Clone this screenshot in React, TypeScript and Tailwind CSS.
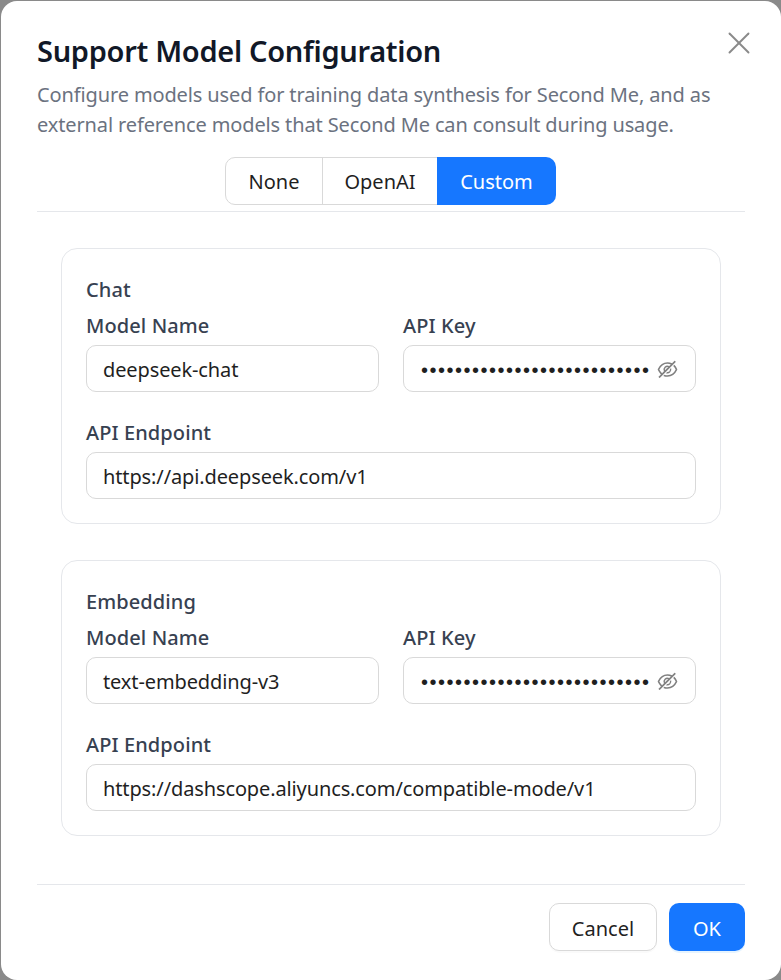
import { X } from 'lucide-react'
import { AiOutlineEyeInvisible } from 'react-icons/ai'

function Field({ label, value, secret }: { label: string; value: string; secret?: boolean }) {
  return (
    <div className="flex flex-col min-w-0">
      <label className="h-6 mb-[7px] leading-6 text-[20px] font-medium text-[#374151] tracking-[0.1px]">{label}</label>
      <div className="h-[47px] flex items-center pl-4 pr-4 pt-0.5 rounded-[10px] border border-[#d9d9d9] bg-white text-[20px] text-[#1f1f1f]">
        {secret ? (
          <>
            <span className="flex-1 pl-px overflow-hidden whitespace-nowrap font-['Liberation_Sans',sans-serif] tracking-[1.5px]">{value}</span>
            <AiOutlineEyeInvisible className="w-[23px] h-[23px] shrink-0 text-[#808080]" />
          </>
        ) : (
          <span className="whitespace-nowrap tracking-[-0.12px]">{value}</span>
        )}
      </div>
    </div>
  )
}

function ModelCard({ title, name, endpoint }: { title: string; name: string; endpoint: string }) {
  return (
    <section className="border border-[#e5e7eb] rounded-2xl pt-[29px] px-6 pb-6">
      <h3 className="h-6 leading-6 text-[20px] font-medium text-[#374151] tracking-[0.1px] mb-3">{title}</h3>
      <div className="grid grid-cols-2 gap-6 mb-[29px]">
        <Field label="Model Name" value={name} />
        <Field label="API Key" value={'•'.repeat(27)} secret />
      </div>
      <Field label="API Endpoint" value={endpoint} />
    </section>
  )
}

export default function App() {
  return (
    <div className="w-[781px] h-[980px] bg-[#8a8a8a] pl-px pt-px font-['Noto_Sans',sans-serif] overflow-hidden">
      <div className="relative w-[780px] h-[979px] bg-white rounded-[16px] pt-[30px] px-9">
        <button className="absolute right-[23px] top-[23px] text-[#8a8a8a]">
          <X className="w-[38px] h-[38px]" strokeWidth={1.2} />
        </button>
        <h2 className="h-10 leading-10 text-[29px] font-semibold text-[#111827] tracking-[-0.3px]">Support Model Configuration</h2>
        <p className="mt-[9px] text-[20px] leading-[30px] text-[#6b7280] tracking-[-0.125px] whitespace-nowrap">
          Configure models used for training data synthesis for Second Me, and as
          <br />
          external reference models that Second Me can consult during usage.
        </p>
        <div className="mt-[17px] pr-px flex justify-center">
          <div className="flex h-12 text-[20px] leading-none">
            <div className="w-[98px] pt-0.5 flex items-center justify-center border border-[#d9d9d9] rounded-l-[10px] text-[#1f1f1f]">None</div>
            <div className="w-[116px] pt-0.5 -ml-px flex items-center justify-center border border-[#d9d9d9] text-[#1f1f1f]">OpenAI</div>
            <div className="w-[119px] pt-0.5 -ml-px flex items-center justify-center bg-[#1677ff] rounded-r-[10px] text-white">Custom</div>
          </div>
        </div>
        <div className="mt-[6px] h-px bg-[#e5e7eb]" />
        <div className="mt-9 mx-6 flex flex-col gap-9">
          <ModelCard title="Chat" name="deepseek-chat" endpoint="https://api.deepseek.com/v1" />
          <ModelCard title="Embedding" name="text-embedding-v3" endpoint="https://dashscope.aliyuncs.com/compatible-mode/v1" />
        </div>
        <div className="mt-12 h-px bg-[#e5e7eb]" />
        <div className="mt-[18px] flex justify-end gap-3 text-[20px]">
          <button className="w-[108px] h-12 pt-1 rounded-[10px] border border-[#d9d9d9] bg-white text-[#1f1f1f] shadow-[0_2px_0_rgba(0,0,0,0.02)]">Cancel</button>
          <button className="w-[76px] h-12 pt-1 rounded-[10px] bg-[#1677ff] text-white shadow-[0_2px_0_rgba(5,145,255,0.1)]">OK</button>
        </div>
      </div>
    </div>
  )
}
